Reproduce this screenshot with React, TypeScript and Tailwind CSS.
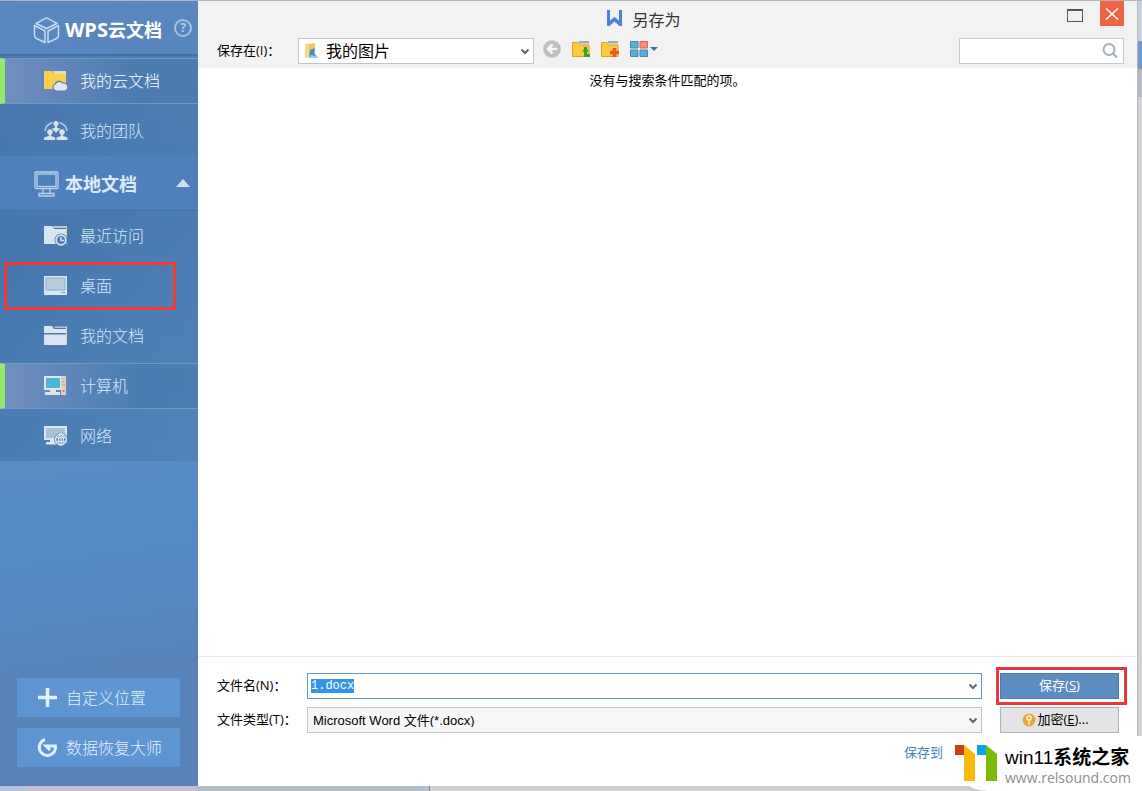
import React, { useEffect, useRef, useState } from "react";

interface NavItem {
  id: string;
  label: string;
  icon: React.ReactNode;
}

const CloudFolderIcon = () => (
  <svg width="24" height="22" viewBox="0 0 24 22">
    <path d="M9 1h13v3H10z" fill="#e5dfc4" />
    <path d="M0 1h8l2 3h12v15H0z" fill="#fbd04f" />
    <path d="M12 21.500a4.200 4.200 0 0 1-1.500-7.800 5 5 0 0 1 8.500-1.200 4.600 4.600 0 0 1 2 9z" fill="#5d7ba4" />
    <path d="M12.500 20.500a3.200 3.200 0 0 1-.8-6.200 4.200 4.200 0 0 1 7-.6 3.500 3.500 0 0 1 2 6.800z" fill="#dfe8f2" />
  </svg>
);

const TeamIcon = () => (
  <svg width="24" height="22" viewBox="0 0 24 22" fill="#d7e3f0">
    <path d="M1 11A11 10 0 0 1 8.500 2.500M15.500 2.500a11 10 0 0 1 7.500 8.500" fill="none" stroke="#b9cde2" strokeWidth="1.500" />
    <circle cx="12" cy="3.500" r="2.500" />
    <path d="M10.800 5h2.400v3l3 .5L12 13 7.800 8.500l3-.5z" />
    <circle cx="6" cy="12" r="2.800" />
    <circle cx="18" cy="12" r="2.800" />
    <path d="M4.800 14h2.400v2l4 1.500V20H0v-2.500L4.800 16zM16.800 14h2.400v2l4.300 1.500V20H12.500v-2.500l4.300-1.500z" />
  </svg>
);

const RecentIcon = () => (
  <svg width="24" height="22" viewBox="0 0 24 22">
    <path d="M0 1h8l2 3h13v15H0z" fill="#d9e5f1" />
    <path d="M9 2h13" stroke="#d9e5f1" strokeWidth="1.500" />
    <path d="M22.500 1v10" stroke="#e6d079" />
    <circle cx="17" cy="15" r="6.500" fill="#4b79ae" />
    <circle cx="17" cy="15" r="4.800" fill="none" stroke="#d9e5f1" strokeWidth="1.800" />
    <path d="M17 12v3.500h3" fill="none" stroke="#d9e5f1" strokeWidth="1.500" />
  </svg>
);

const DesktopIcon = () => (
  <svg width="24" height="22" viewBox="0 0 24 22">
    <path d="M0 1h23v19H0z" fill="#dbe6f1" />
    <path d="M2 3h19v12H2z" fill="#b9cddf" stroke="#8fabc8" />
    <path d="M17 17.500h4" stroke="#7c9dc2" />
  </svg>
);

const DocumentsIcon = () => (
  <svg width="24" height="22" viewBox="0 0 24 22" fill="#dbe6f1">
    <path d="M0 1h8l2 3h13v4H0zM0 9.500h23V20H0z" />
    <path d="M10 1.500h12v1.500H11z" opacity=".7" />
    <path d="M22 1h1v19h-1z" fill="#e3d58c" />
  </svg>
);

const ComputerIcon = () => (
  <svg width="24" height="22" viewBox="0 0 24 22">
    <path d="M0 1h18v14H0z" fill="#e3e6e5" />
    <path d="M2 3h14v10H2z" fill="#4db5da" />
    <path d="M17 1h5v19h-5z" fill="#ddd3c5" />
    <path d="M18 4h3M18 7h3M18 10h3" stroke="#cf9d72" />
    <path d="M6 15h6v2H6zM1 17h15v3H1z" fill="#dfe3e4" />
    <circle cx="19.500" cy="16" r="1.200" fill="#da8250" />
  </svg>
);

const NetworkIcon = () => (
  <svg width="24" height="22" viewBox="0 0 24 22">
    <path d="M0 1h23v14H0z" fill="#dbe6f1" />
    <path d="M2 3h19v10H2z" fill="#a9c2da" />
    <path d="M6 15h5v2H6zM2 17h11v2.500H2z" fill="#dbe6f1" />
    <circle cx="17" cy="14.500" r="6.800" fill="#4b7cb1" />
    <g fill="none" stroke="#dbe6f1" strokeWidth="1.300">
      <circle cx="17" cy="14.500" r="5.500" />
      <ellipse cx="17" cy="14.500" rx="2.500" ry="5.500" />
      <path d="M12 12.700h10M12 16.300h10M17 9v11" />
    </g>
  </svg>
);

const CubeIcon = () => (
  <svg width="28" height="28" viewBox="0 0 28 28" fill="none" stroke="#c9dcf0" strokeWidth="1.500" strokeLinejoin="round">
    <path d="M13.500 2Q14 2 24 7.500L13.500 12.500 3 7.500Q13 2 13.500 2zM1.500 9.500l10.500 5.500V26.500L3.500 22.500q-2-1-2-3zM25.500 9.500l-10.500 5.500V26.500L23.500 22.500q2-1 2-3z" />
  </svg>
);

const MonitorIcon = () => (
  <svg width="28" height="28" viewBox="0 0 28 28" fill="none" stroke="#b9d1ea" strokeWidth="1.300">
    <rect x="2" y="2" width="23" height="16.500" rx="1" />
    <rect x="4" y="4" width="19" height="12.500" />
    <path d="M10 19v4M17 19v4M6 23.500h15v2.500H6z" />
  </svg>
);

const Chevron = () => (
  <svg className="pointer-events-none absolute right-1 top-2 h-2.5 w-2.5" viewBox="0 0 10 10">
    <path d="M1.500 3.500 5 7l3.500-3.500" fill="none" stroke="#666" strokeWidth="2" />
  </svg>
);

const FolderIcon = ({ children }: { children: React.ReactNode }) => (
  <svg width="19" height="18" viewBox="0 0 19 18">
    <path d="M7 1h10v2.500H7z" fill="#a9a9a9" />
    <path d="M.5 2.500H6L7.500 5H17v11.500H.5z" fill="#fccb3a" stroke="#d9a227" />
    {children}
  </svg>
);

const CLOUD_ITEMS: NavItem[] = [
  { id: "cloud", label: "我的云文档", icon: <CloudFolderIcon /> },
  { id: "team", label: "我的团队", icon: <TeamIcon /> },
];

const LOCAL_ITEMS: NavItem[] = [
  { id: "recent", label: "最近访问", icon: <RecentIcon /> },
  { id: "desktop", label: "桌面", icon: <DesktopIcon /> },
  { id: "documents", label: "我的文档", icon: <DocumentsIcon /> },
  { id: "computer", label: "计算机", icon: <ComputerIcon /> },
  { id: "network", label: "网络", icon: <NetworkIcon /> },
];

function NavGroup({ items, selected, onSelect }: { items: NavItem[]; selected: string; onSelect: (id: string) => void }) {
  return (
    <ul className="bg-linear-to-r from-[#396ba0]/45 to-[#4678a8]/45">
      {items.map((item) => (
        <li key={item.id} className="relative py-0.5">
          <button
            onClick={() => onSelect(item.id)}
            className={`flex h-[46px] w-full items-center gap-3 border-y border-l-[5px] pl-[39px] text-base font-light ${
              item.id === selected
                ? "border-y-[#6f98c4] border-l-[#98e86e] bg-linear-to-r from-[#7090bf] to-[#4675a8]/30 to-70%"
                : "border-transparent"
            } ${item.id === "cloud" ? "text-white" : "text-[#d8e9fa]"}`}
          >
            {item.icon}
            {item.label}
          </button>
          {item.id === "desktop" && (
            <span className="pointer-events-none absolute inset-y-px left-1 w-[172px] border-[3px] border-[#ef3a36]" />
          )}
        </li>
      ))}
    </ul>
  );
}

function Sidebar() {
  const [cloud, setCloud] = useState("cloud");
  const [local, setLocal] = useState("computer");
  const [open, setOpen] = useState(true);

  return (
    <aside className="flex w-[198px] shrink-0 flex-col bg-[linear-gradient(172deg,#5b88bf_0%,#517fb9_28%,#5a8cc5_58%,#558bc6_66%,#5789c4_74%,#5882b8_85%)]">
      <div className="flex h-[55px] items-center gap-1 border-b-2 border-[#41709f] pt-1 pl-[33px]">
        <CubeIcon />
        <h2 className="flex items-center text-lg font-bold text-white">
          <span className="text-xl">WPS</span>云文档
        </h2>
        <button aria-label="帮助" className="mr-1.5 mb-1 ml-auto size-[18px] rounded-full border-2 border-[#a5c2e2] text-xs leading-none font-bold text-[#b5cee8]">
          ?
        </button>
      </div>
      <NavGroup items={CLOUD_ITEMS} selected={cloud} onSelect={setCloud} />
      <button onClick={() => setOpen(!open)} className="flex h-[55px] items-center gap-1 border-b border-[#41709f] bg-[#4f80bb] pt-0.5 pl-[33px] text-lg font-bold text-[#dcebfa]">
        <MonitorIcon />
        本地文档
        <svg className="mr-2 mb-1 ml-auto" width="14" height="9" viewBox="0 0 14 9">
          <path d="M0 9 7 1l7 8z" fill="#d2e1f1" />
        </svg>
      </button>
      {open && <NavGroup items={LOCAL_ITEMS} selected={local} onSelect={setLocal} />}
      <div className="mt-auto flex flex-col gap-[11px] px-[17px] pb-[19px] text-base font-light text-[#e2f2ff]">
        <button className="flex h-[39px] w-[163px] items-center gap-2 bg-[#5e94d2] pl-5">
          <svg width="21" height="21" viewBox="0 0 21 21">
            <path d="M10.500 1v19M1 10.500h19" stroke="#e3f4ff" strokeWidth="3.500" />
          </svg>
          自定义位置
        </button>
        <button className="flex h-[39px] w-[163px] items-center gap-2 bg-[#5e94d2] pl-5">
          <svg width="21" height="21" viewBox="0 0 21 21" fill="none" stroke="#e0f2ff" strokeWidth="3">
            <path d="M8 2.500A8.200 8.200 0 1 0 18.500 9H9l4 4" />
          </svg>
          数据恢复大师
        </button>
      </div>
    </aside>
  );
}

function Toolbar() {
  return (
    <div className="flex items-center pr-[13px] pl-[19px]">
      <label htmlFor="folder" className="w-[81px] text-[13px]">保存在(I)：</label>
      <div className="relative">
        <select id="folder" className="h-[26px] w-[236px] appearance-none border border-[#c3c3c3] bg-white pl-[27px] text-base leading-none text-black">
          <option>我的图片</option>
        </select>
        <svg className="pointer-events-none absolute top-1 left-1.5" width="16" height="18" viewBox="0 0 16 18">
          <path d="M1 2 5 1v14l-4 1z" fill="#f1dc8c" />
          <path d="m5 2 6-1v13l-6 2z" fill="#e7ca68" />
          <path d="m6 8 5-2-1 5 4 5H5z" fill="#438cc4" />
          <path d="m7 13 5 1 2 2H5z" fill="#a1cce4" />
        </svg>
        <Chevron />
      </div>
      <div className="mb-1 ml-[9px] flex items-center gap-2.5">
        <button aria-label="后退">
          <svg width="19" height="18" viewBox="0 0 19 18">
            <circle cx="9" cy="9" r="8.800" fill="#bfbfbf" />
            <path d="M14.500 9H5.500M9.500 4.500 5 9l4.500 4.500" fill="none" stroke="#f7f7f7" strokeWidth="2.500" />
          </svg>
        </button>
        <button aria-label="向上一级">
          <FolderIcon>
            <path d="M13.500 7v8.500H18" fill="none" stroke="#39a22c" strokeWidth="3" />
            <path d="M10 11.500 13.500 7l3.500 4.500z" fill="#39a22c" />
          </FolderIcon>
        </button>
        <button aria-label="新建文件夹">
          <FolderIcon>
            <path d="M13.500 8v9M9 12.500h9" stroke="#ea5a24" strokeWidth="3.500" />
          </FolderIcon>
        </button>
        <button aria-label="视图">
          <svg width="30" height="18" viewBox="0 0 30 18">
            <path d="M.5 1.500h7.500v6.500h-7.500zM.5 10h7.500v6.500h-7.500zM10 10h7.500v6.500h-7.500z" fill="#5caed8" stroke="#4386b5" />
            <path d="M10 1.500h7.500v6.500h-7.500z" fill="#fa8e7a" stroke="#d76457" />
            <path d="M20 7h8l-4 4z" fill="#3b6e96" />
          </svg>
        </button>
      </div>
      <div className="relative ml-auto">
        <input aria-label="搜索" className="h-[26px] w-[165px] border border-[#cacaca] bg-white pr-6 pl-2 text-[13px] outline-none" />
        <svg className="absolute top-1 right-1.5" width="16" height="17" viewBox="0 0 16 17" fill="none" stroke="#a0b2bc" strokeWidth="2">
          <circle cx="7" cy="7.500" r="5.500" />
          <path d="m11 11.500 4 4" />
        </svg>
      </div>
    </div>
  );
}

function SaveForm() {
  const nameRef = useRef<HTMLInputElement>(null);

  // start with the file name selected, ready to be typed over
  useEffect(() => {
    nameRef.current?.focus();
    nameRef.current?.select();
  }, []);

  return (
    <form className="border-t border-[#e9e9e9] pt-4 pr-[18px] pb-[23px] pl-[19px] text-[13px]" onSubmit={(e) => e.preventDefault()}>
      <div className="grid grid-cols-[72px_1fr_119px] items-center gap-x-[18px] gap-y-2">
        <label htmlFor="name" className="whitespace-nowrap">文件名(N)：</label>
        <div className="relative">
          <input
            id="name"
            ref={nameRef}
            defaultValue="1.docx"
            className="block h-[26px] w-full border border-[#5b9bc9] bg-white px-[3px] font-['Liberation_Mono',monospace] text-xs text-black outline-none selection:bg-[#3394ea] selection:text-white"
          />
          <Chevron />
        </div>
        <div className="relative">
          <button type="submit" className="block h-[26px] w-full border border-[#4d7ba8] bg-[#5c8cc2] text-white">
            保存(<u>S</u>)
          </button>
          <span className="pointer-events-none absolute -inset-y-1.5 -right-2 -left-1 border-[3px] border-[#e9383c]" />
        </div>
        <label htmlFor="type" className="whitespace-nowrap">文件类型(T)：</label>
        <div className="relative">
          <select id="type" className="block h-[26px] w-full appearance-none border border-[#c3c3c3] bg-[#f7f7f7] px-[5px] font-['Liberation_Sans','Noto_Sans_CJK_SC',sans-serif] text-[13px] leading-none text-black">
            <option>Microsoft Word 文件(*.docx)</option>
          </select>
          <Chevron />
        </div>
        <button type="button" className="flex h-[26px] items-center justify-center border border-[#b2b2b2] bg-[#e4e4e6] pr-2">
          <svg width="15" height="15" viewBox="0 0 15 15">
            <circle cx="7" cy="7" r="6.500" fill="#e8a73c" />
            <circle cx="7" cy="5" r="2" fill="none" stroke="#fff3d2" strokeWidth="1.500" />
            <path d="M7 7v4.500" stroke="#fff3d2" strokeWidth="1.500" />
          </svg>
          加密(<u>E</u>)...
        </button>
      </div>
      <div className="mt-2.5 mr-44 flex h-5 items-center justify-end">
        <a href="#" className="text-[#4883b5]">保存到</a>
      </div>
    </form>
  );
}

function SiteBadge() {
  return (
    <div className="absolute right-0 bottom-0 flex h-[55px] w-[194px] items-start gap-2 rounded-bl-[40px] bg-white pt-2 pl-[7px]">
      <svg width="42" height="38" viewBox="0 0 42 38">
        <path d="M0 1h9v10H0z" fill="#d13c12" />
        <path d="M9 1l11 9v27H9z" fill="#fdb908" />
        <path d="M22 1h9v10h-9z" fill="#08a5ee" />
        <path d="M31 1l11 9v27H31z" fill="#7cba05" />
      </svg>
      <div className="whitespace-nowrap">
        <div className="pt-0.5 font-['Liberation_Sans','Noto_Sans_CJK_SC',sans-serif] text-[19px] leading-6 text-black">
          win11<b>系统之家</b>
        </div>
        <div className="text-sm leading-4 text-[#8e8e8e]">www.relsound.com</div>
      </div>
    </div>
  );
}

export default function App() {
  return (
    <div className="relative flex min-h-screen flex-col bg-[#b4b4b8] pt-px font-['Open_Sans','Noto_Sans_CJK_SC',sans-serif] text-black">
      <div className="flex flex-1">
        <div className="flex flex-1">
          <Sidebar />
          <main className="flex flex-1 flex-col bg-white">
            <header className="bg-[#f2f2f2] pb-1">
              <div className="flex h-[37px] items-start">
                <h1 className="flex flex-1 items-center justify-center gap-2 pt-[7px] pl-[26px] text-base text-[#333]">
                  <svg className="mb-1" width="18" height="18" viewBox="0 0 18 18">
                    <path d="M1 1h3v10.500L8.500 8l4.500 3.500V1h3v16h-2.500l-5-4.500-5 4.500H1z" fill="#4a7fdb" />
                  </svg>
                  另存为
                </h1>
                <button aria-label="最大化" className="flex h-[29px] w-6 items-center justify-center">
                  <span className="h-[13px] w-4 border border-t-2 border-[#555]" />
                </button>
                <button aria-label="关闭" className="mr-[13px] ml-[13px] flex h-[25px] w-6 items-center justify-center bg-[#eb6444]">
                  <svg width="14" height="12" viewBox="0 0 14 12">
                    <path d="m1 .5 12 11M13 .5l-12 11" stroke="#fff" strokeWidth="1.500" />
                  </svg>
                </button>
              </div>
              <Toolbar />
            </header>
            <div className="flex-1 pt-0.5 text-center text-[13px] leading-5">没有与搜索条件匹配的项。</div>
            <SaveForm />
          </main>
        </div>
        <div className="flex w-[5px] flex-col border-l border-[#b8b8bc]">
          <div className="h-10 bg-[#c6d0e2]" />
          <div className="h-7 bg-[#6f9bd3]" />
          <div className="h-7 bg-[#b5bac0]" />
          <div className="flex-1 bg-[#d2d2d4]" />
        </div>
      </div>
      <div className="flex h-[5px]">
        <div className="w-7 bg-[#b5c2d8]" />
        <div className="w-[170px] bg-[#c6bdce]" />
        <div className="w-[232px] border-r border-[#888] bg-[#b4bfcc]" />
        <div className="flex-1 bg-[#cfcfcf]" />
      </div>
      <SiteBadge />
    </div>
  );
}
